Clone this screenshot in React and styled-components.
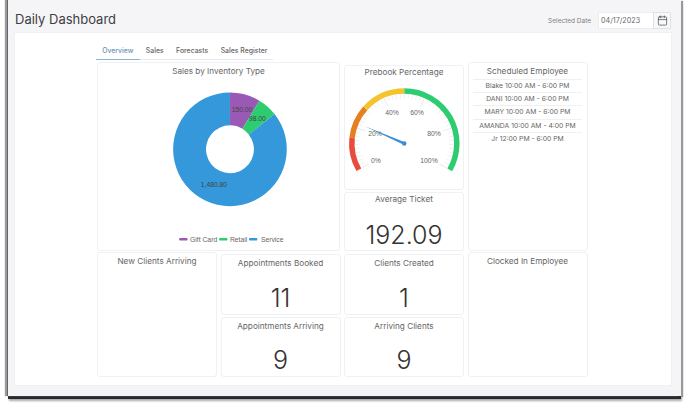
import React from "react";
import styled, { createGlobalStyle } from "styled-components";
import { Calendar } from "lucide-react";

const GlobalStyle = createGlobalStyle`
  html, body {
    margin: 0;
    padding: 0;
    background: #fff;
    font-family: Inter, "Liberation Sans", sans-serif;
    overflow: hidden;
  }
`;

const Page = styled.div`
  width: 688px;
  height: 412px;
  padding: 0 7px 0 8px;
  box-sizing: border-box;
`;

const Window = styled.div`
  height: 396px;
  background: #f5f5f8;
  padding: 0 9px 10px 6px;
  box-sizing: border-box;
  display: flex;
  flex-direction: column;
  box-shadow: -1px 0 0 #666, -3px 0 1px #999, 0 3px 0 #2a2a2a, 2px 1px 1px #999, 1px 5px 2px #aaa;
`;

const Header = styled.header`
  height: 32px;
  padding-top: 6px;
  box-sizing: border-box;
  display: flex;
  align-items: center;
  justify-content: space-between;
  flex-shrink: 0;
`;

const Title = styled.h1`
  margin: 0 0 0 1px;
  font-size: 13px;
  font-weight: 400;
  color: #3c4043;
`;

const DateBox = styled.div`
  display: flex;
  align-items: center;
  margin: 3px 1px 0 0;
`;

const DateLabel = styled.span`
  font-size: 6.5px;
  color: #808080;
  margin-right: 7px;
`;

const DateInput = styled.div`
  width: 55px;
  height: 17px;
  box-sizing: border-box;
  background: #fff;
  border: 1px solid #eceef1;
  border-right: none;
  font-size: 7.2px;
  color: #666;
  padding-left: 2px;
  display: flex;
  align-items: center;
`;

const DateButton = styled.div`
  width: 18px;
  height: 17px;
  box-sizing: border-box;
  background: #f8f9fa;
  border: 1px solid #dfe2e6;
  color: #444;
  display: flex;
  align-items: center;
  justify-content: center;
`;

const Panel = styled.main`
  flex: 1;
  background: #fff;
  border: 1px solid #eff0f3;
  box-sizing: border-box;
  padding: 8px 0 0 82px;
`;

const Tabs = styled.nav`
  width: 177px;
  height: 19px;
  margin-left: -1px;
  display: flex;
  border-bottom: 1px solid #e9ecef;
  box-sizing: border-box;
`;

const Tab = styled.div`
  font-size: 6.9px;
  font-weight: 500;
  white-space: nowrap;
  padding: 5px 6.2px 0;
  height: 19px;
  box-sizing: border-box;
  color: ${(p) => (p.$active ? "#6a93b2" : "#666")};
  border-bottom: ${(p) => (p.$active ? "1px solid #8fb4cf" : "none")};
`;

const Grid = styled.div`
  display: grid;
  grid-template-columns: repeat(4, 120px);
  column-gap: 3.5px;
  grid-template-rows: 189px 125px;
  row-gap: 1px;
  margin-top: 2px;
`;

const Card = styled.section`
  border: 1px solid #f0f1f4;
  border-radius: 3px;
  background: #fff;
  box-sizing: border-box;
  text-align: center;
  min-width: 0;
  height: ${(p) => p.$height || "auto"};
  grid-column: ${(p) => (p.$wide ? "span 2" : "auto")};
  width: ${(p) => (p.$wide ? "243px" : "auto")};
  display: flex;
  flex-direction: column;
`;

const CardTitle = styled.h3`
  margin: 0;
  padding-top: ${(p) => p.$top || "2.5px"};
  font-size: 8.2px;
  line-height: 11px;
  font-weight: 400;
  color: #666;
`;

const Stack = styled.div`
  display: flex;
  flex-direction: column;
  gap: 2px;
  padding-top: ${(p) => p.$top || "0"};
`;

const Metric = styled.div`
  flex: 1;
  display: flex;
  align-items: flex-end;
  justify-content: center;
  font-size: 25px;
  line-height: 30px;
  font-weight: 300;
  color: #333;
  padding-bottom: ${(p) => p.$bottom || "1px"};
`;

const Shifts = styled.ul`
  list-style: none;
  margin: 2.5px 4.5px 0;
  padding: 0;
`;

const Shift = styled.li`
  font-size: 6.8px;
  line-height: 12.2px;
  color: #666;
  border-top: 1px solid #eff0f2;
`;

const ChartText = styled.text`
  font-family: "Liberation Sans", Arial, sans-serif;
  font-size: 6.8px;
  fill: ${(p) => p.$fill || "#666"};
`;

const polar = (cx, cy, r, deg) => {
  const a = (deg * Math.PI) / 180;
  return [cx + r * Math.cos(a), cy - r * Math.sin(a)];
};

const f = (n) => n.toFixed(2);

function donutSlice(cx, cy, ro, ri, from, to) {
  // angles are clockwise from 12 o'clock
  const [x1, y1] = polar(cx, cy, ro, 90 - from);
  const [x2, y2] = polar(cx, cy, ro, 90 - to);
  const [x3, y3] = polar(cx, cy, ri, 90 - to);
  const [x4, y4] = polar(cx, cy, ri, 90 - from);
  const big = to - from > 180 ? 1 : 0;
  return `M${f(x1)} ${f(y1)}A${ro} ${ro} 0 ${big} 1 ${f(x2)} ${f(y2)}L${f(x3)} ${f(y3)}A${ri} ${ri} 0 ${big} 0 ${f(x4)} ${f(y4)}Z`;
}

const sales = [
  { name: "Gift Card", value: 150, color: "#9b59b6" },
  { name: "Retail", value: 98, color: "#2ecc71" },
  { name: "Service", value: 1480.8, color: "#3498db" },
];

function SalesDonut() {
  const total = sales.reduce((s, x) => s + x.value, 0);
  let at = 0;
  const cx = 132;
  const cy = 72.5;
  return (
    <svg width="241" height="174" viewBox="0 0 241 174">
      {sales.map((s) => {
        const from = at;
        at += (s.value / total) * 360;
        return <path key={s.name} d={donutSlice(cx, cy, 57, 24, from, at)} fill={s.color} />;
      })}
      <ChartText x="133.7" y="35" $fill="#444">150.00</ChartText>
      <ChartText x="151" y="44" $fill="#444">98.00</ChartText>
      <ChartText x="102.7" y="110.5" $fill="#444">1,480.80</ChartText>

      <rect x="81" y="161.5" width="8.5" height="2.4" rx="1" fill="#9b59b6" />
      <ChartText x="92" y="165">Gift Card</ChartText>
      <rect x="121" y="161.5" width="8.5" height="2.4" rx="1" fill="#2ecc71" />
      <ChartText x="132" y="165">Retail</ChartText>
      <rect x="151" y="161.5" width="8.5" height="2.4" rx="1" fill="#3498db" />
      <ChartText x="163" y="165">Service</ChartText>
    </svg>
  );
}

const gaugeBands = [
  { from: 0, to: 0.15, color: "#e74c3c" },
  { from: 0.15, to: 0.3, color: "#e67e22" },
  { from: 0.3, to: 0.5, color: "#f4c430" },
  { from: 0.5, to: 1, color: "#2ecc71" },
];

const gaugeLabels = [
  ["0%", 31, 84.5],
  ["20%", 30, 57.5],
  ["40%", 47, 36.5],
  ["60%", 72, 36.5],
  ["80%", 89, 57.5],
  ["100%", 84, 84.5],
];

function PrebookGauge() {
  const cx = 59.3;
  const cy = 65.5;
  const angle = (t) => 210 - t * 240;
  const ticks = [];
  for (let i = 0; i <= 50; i++) {
    const major = i % 10 === 0;
    const [x1, y1] = polar(cx, cy, 49, angle(i / 50));
    const [x2, y2] = polar(cx, cy, major ? 41 : 45, angle(i / 50));
    ticks.push(
      <line key={i} x1={f(x1)} y1={f(y1)} x2={f(x2)} y2={f(y2)} stroke="#e6e6e6" strokeWidth={major ? 0.9 : 0.6} />
    );
  }
  const [tipX, tipY] = polar(cx, cy, 43, angle(0.224));
  const [baseAX, baseAY] = polar(cx, cy, 1.4, angle(0.224) + 90);
  const [baseBX, baseBY] = polar(cx, cy, 1.4, angle(0.224) - 90);
  return (
    <svg width="118" height="108" viewBox="0 0 118 108">
      {gaugeBands.map((b) => {
        const [x1, y1] = polar(cx, cy, 52.5, angle(b.from));
        const [x2, y2] = polar(cx, cy, 52.5, angle(b.to));
        const big = (b.to - b.from) * 240 > 180 ? 1 : 0;
        return (
          <path
            key={b.from}
            d={`M${f(x1)} ${f(y1)}A52.5 52.5 0 ${big} 1 ${f(x2)} ${f(y2)}`}
            fill="none"
            stroke={b.color}
            strokeWidth="5.5"
          />
        );
      })}
      {ticks}
      {gaugeLabels.map(([label, x, y]) => (
        <ChartText key={label} x={x} y={y} textAnchor="middle">{label}</ChartText>
      ))}
      <path d={`M${f(tipX)} ${f(tipY)}L${f(baseAX)} ${f(baseAY)}L${f(baseBX)} ${f(baseBY)}Z`} fill="#3a8ed4" />
      <circle cx={cx} cy={cy} r="2.2" fill="#3a8ed4" />
    </svg>
  );
}

const shifts = [
  "Blake 10:00 AM - 6:00 PM",
  "DANI 10:00 AM - 6:00 PM",
  "MARY 10:00 AM - 6:00 PM",
  "AMANDA 10:00 AM - 4:00 PM",
  "Jr 12:00 PM - 6:00 PM",
];

export default function App() {
  return (
    <Page>
      <GlobalStyle />
      <Window>
        <Header>
          <Title>Daily Dashboard</Title>
          <DateBox>
            <DateLabel>Selected Date</DateLabel>
            <DateInput>04/17/2023</DateInput>
            <DateButton>
              <Calendar size={11} strokeWidth={1.5} />
            </DateButton>
          </DateBox>
        </Header>
        <Panel>
          <Tabs>
            <Tab $active>Overview</Tab>
            <Tab>Sales</Tab>
            <Tab>Forecasts</Tab>
            <Tab>Sales Register</Tab>
          </Tabs>
          <Grid>
            <Card $wide>
              <CardTitle>Sales by Inventory Type</CardTitle>
              <SalesDonut />
            </Card>
            <Stack $top="3px">
              <Card $height="125px">
                <CardTitle $top="1px">Prebook Percentage</CardTitle>
                <PrebookGauge />
              </Card>
              <Card $height="59px">
                <CardTitle $top="0.5px">Average Ticket</CardTitle>
                <Metric $bottom="0">192.09</Metric>
              </Card>
            </Stack>
            <Card>
              <CardTitle>Scheduled Employee</CardTitle>
              <Shifts>
                {shifts.map((s) => (
                  <Shift key={s}>{s}</Shift>
                ))}
              </Shifts>
            </Card>
            <Card>
              <CardTitle>New Clients Arriving</CardTitle>
            </Card>
            <Stack $top="2px">
              <Card $height="61px">
                <CardTitle>Appointments Booked</CardTitle>
                <Metric>11</Metric>
              </Card>
              <Card $height="60px">
                <CardTitle>Appointments Arriving</CardTitle>
                <Metric>9</Metric>
              </Card>
            </Stack>
            <Stack $top="2px">
              <Card $height="61px">
                <CardTitle>Clients Created</CardTitle>
                <Metric>1</Metric>
              </Card>
              <Card $height="60px">
                <CardTitle>Arriving Clients</CardTitle>
                <Metric>9</Metric>
              </Card>
            </Stack>
            <Card>
              <CardTitle>Clocked In Employee</CardTitle>
            </Card>
          </Grid>
        </Panel>
      </Window>
    </Page>
  );
}
